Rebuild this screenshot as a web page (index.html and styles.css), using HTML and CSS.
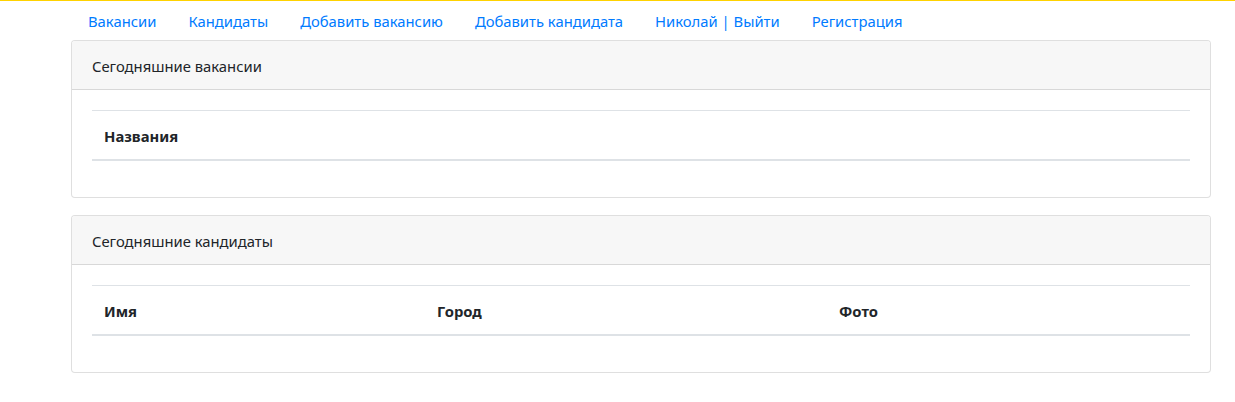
FILE: index.html
```html
<!DOCTYPE html>
<html lang="ru">
<head>
<meta charset="utf-8">
<title>Работа</title>
<link rel="stylesheet" href="styles.css">
</head>
<body>
<div class="page">
  <ul class="nav">
    <li><a class="nav-link" href="#">Вакансии</a></li>
    <li><a class="nav-link" href="#">Кандидаты</a></li>
    <li><a class="nav-link" href="#">Добавить вакансию</a></li>
    <li><a class="nav-link" href="#">Добавить кандидата</a></li>
    <li><a class="nav-link" href="#">Николай | Выйти</a></li>
    <li><a class="nav-link" href="#">Регистрация</a></li>
  </ul>
  <div class="card">
    <div class="card-header">Сегодняшние вакансии</div>
    <div class="card-body">
      <table class="table">
        <thead>
          <tr><th>Названия</th></tr>
        </thead>
        <tbody></tbody>
      </table>
    </div>
  </div>
  <div class="card card-second">
    <div class="card-header">Сегодняшние кандидаты</div>
    <div class="card-body">
      <table class="table">
        <thead>
          <tr><th class="col-name">Имя</th><th class="col-city">Город</th><th class="col-photo">Фото</th></tr>
        </thead>
        <tbody></tbody>
      </table>
    </div>
  </div>
</div>
</body>
</html>
```
FILE: styles.css
```css
html, body {
  margin: 0;
  padding: 0;
}
body {
  font-family: "Noto Sans", "Open Sans", sans-serif;
  font-size: 14.8px;
  line-height: 24px;
  color: #212529;
  background: #fff;
  border-top: 1px solid #ffd200;
}
.page {
  width: 1140px;
  margin-left: 71px;
}
.nav {
  display: flex;
  list-style: none;
  margin: 0;
  padding: 0 0 0 1px;
}
.nav-link {
  display: block;
  padding: 8px 16px 7px;
  color: #007bff;
  text-decoration: none;
}
.card {
  border: 1px solid rgba(0,0,0,.125);
  border-radius: 4px;
  background: #fff;
  overflow: hidden;
}
.card-second {
  margin-top: 17px;
}
.card-header {
  padding: 13px 20px 11px;
  background: #f7f7f7;
  border-bottom: 1px solid rgba(0,0,0,.125);
}
.card-body {
  padding: 20px;
}
.table {
  width: 100%;
  border-collapse: collapse;
  margin-bottom: 16px;
}
.table th {
  text-align: left;
  font-weight: 700;
  padding: 13px 12px 11px;
  border-top: 1px solid #dee2e6;
  border-bottom: 2px solid #dee2e6;
}
.col-name { width: 309px; }
.col-city { width: 378px; }
```
